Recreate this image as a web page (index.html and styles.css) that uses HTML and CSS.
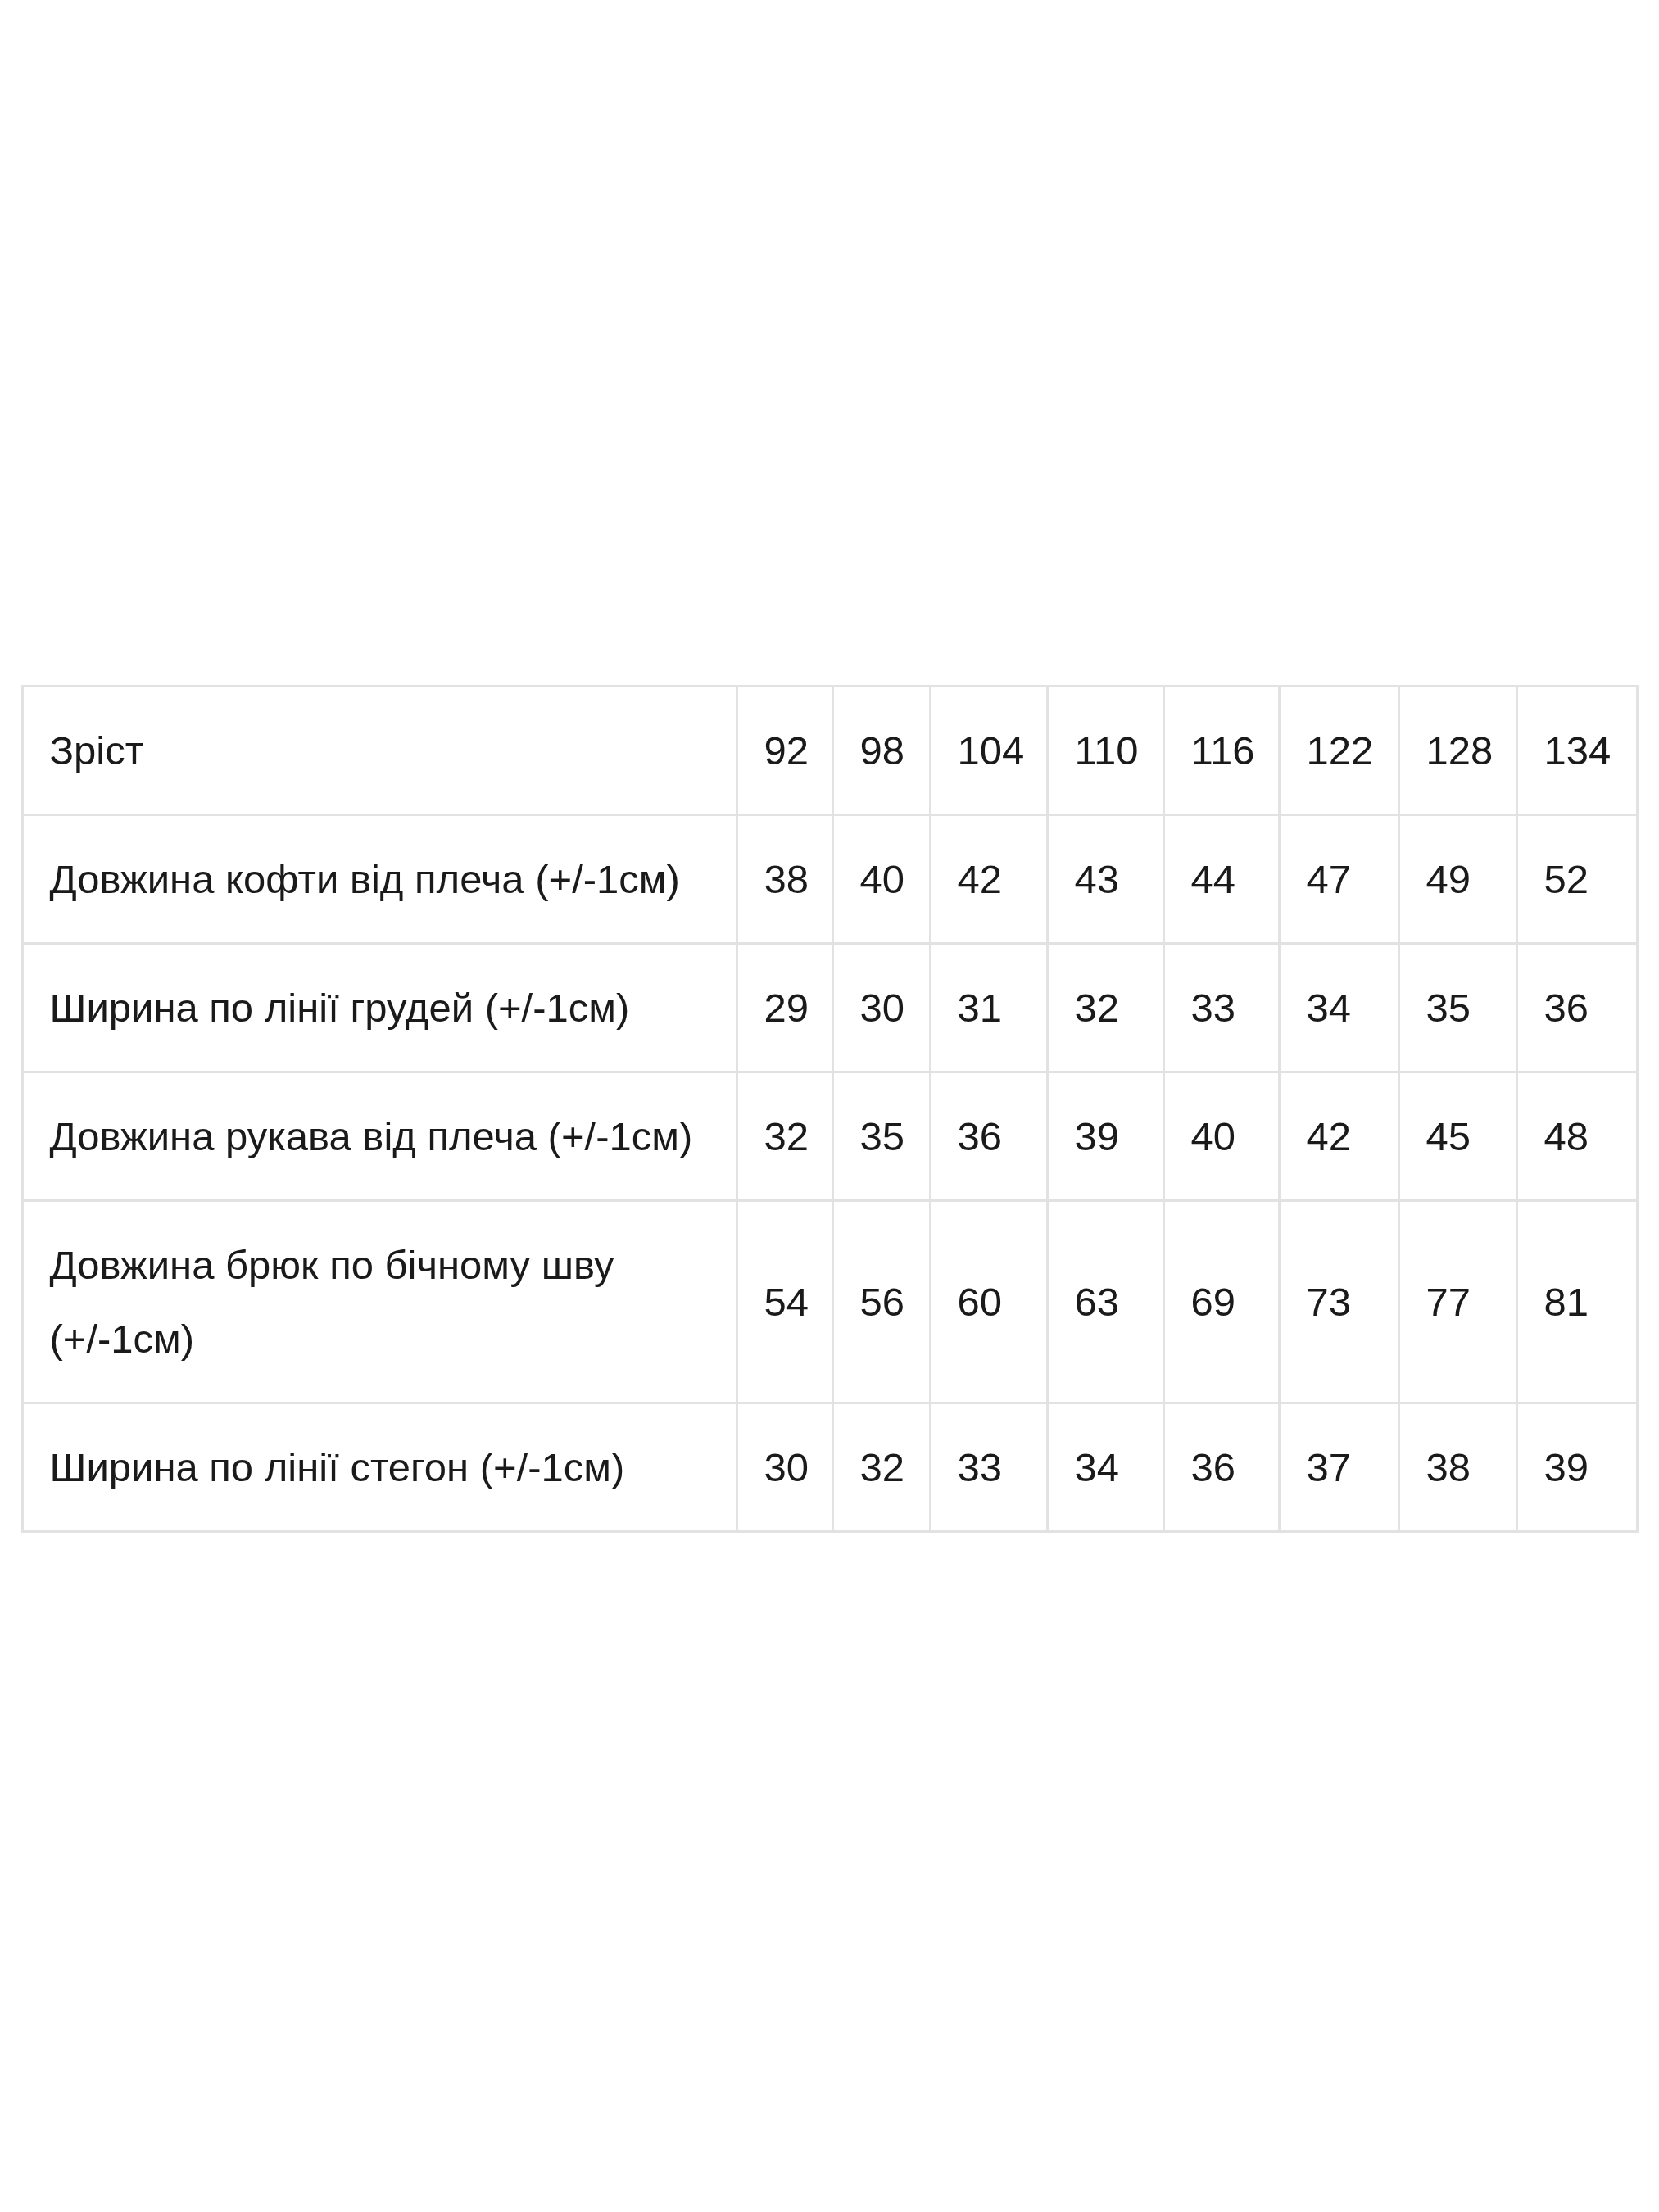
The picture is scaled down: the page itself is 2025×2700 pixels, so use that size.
FILE: index.html
```html
<!DOCTYPE html>
<html lang="uk">
<head>
<meta charset="utf-8">
<title>Розмірна сітка</title>
<link rel="stylesheet" href="styles.css">
</head>
<body>
<main class="page">
  <table class="sizes">
    <colgroup>
      <col class="col-label">
      <col class="col-a">
      <col class="col-b">
      <col class="col-c">
      <col class="col-d">
      <col class="col-e">
      <col class="col-f">
      <col class="col-g">
      <col class="col-h">
    </colgroup>
    <tbody>
      <tr><td>Зріст</td><td>92</td><td>98</td><td>104</td><td>110</td><td>116</td><td>122</td><td>128</td><td>134</td></tr>
      <tr><td>Довжина кофти від плеча (+/-1см)</td><td>38</td><td>40</td><td>42</td><td>43</td><td>44</td><td>47</td><td>49</td><td>52</td></tr>
      <tr><td>Ширина по лінії грудей (+/-1см)</td><td>29</td><td>30</td><td>31</td><td>32</td><td>33</td><td>34</td><td>35</td><td>36</td></tr>
      <tr><td>Довжина рукава від плеча (+/-1см)</td><td>32</td><td>35</td><td>36</td><td>39</td><td>40</td><td>42</td><td>45</td><td>48</td></tr>
      <tr><td>Довжина брюк по бічному шву (+/-1см)</td><td>54</td><td>56</td><td>60</td><td>63</td><td>69</td><td>73</td><td>77</td><td>81</td></tr>
      <tr><td>Ширина по лінії стегон (+/-1см)</td><td>30</td><td>32</td><td>33</td><td>34</td><td>36</td><td>37</td><td>38</td><td>39</td></tr>
    </tbody>
  </table>
</main>
</body>
</html>
```

FILE: styles.css
```css
html, body {
  margin: 0;
  padding: 0;
  background: #ffffff;
}

.page {
  box-sizing: border-box;
  height: 2700px;
  padding-top: 6px;
  display: flex;
  align-items: center;
  justify-content: center;
}

.sizes {
  width: 1971px;
  table-layout: fixed;
  border-collapse: collapse;
  font-family: "Liberation Sans", Arial, sans-serif;
  font-size: 49px;
  line-height: 90px;
  color: #1a1a1a;
}

.sizes td {
  border: 3px solid #e2e2e2;
  padding: 32px 20px 32px 32px;
  text-align: left;
  vertical-align: middle;
}

.col-label { width: 872px; }
.col-a { width: 117px; }
.col-b { width: 119px; }
.col-c { width: 143px; }
.col-d { width: 142px; }
.col-e { width: 141px; }
.col-f { width: 146px; }
.col-g { width: 144px; }
.col-h { width: 147px; }
```
